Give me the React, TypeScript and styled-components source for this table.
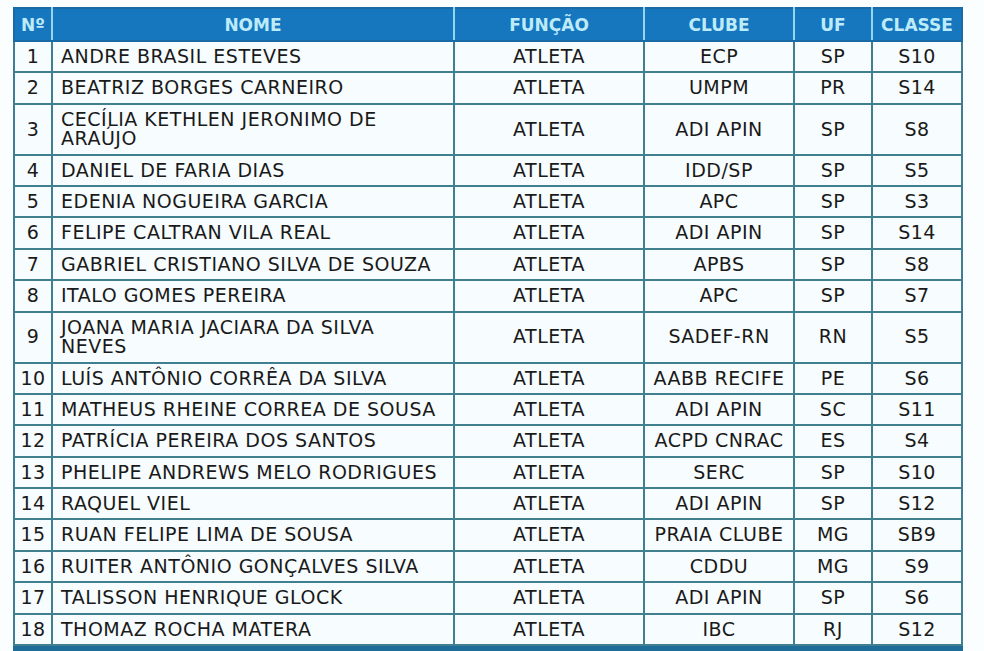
import styled, { createGlobalStyle } from 'styled-components'

const GlobalStyle = createGlobalStyle`
  html, body {
    margin: 0;
    padding: 0;
    background: #fbfeff;
  }
`

const Page = styled.div`
  padding: 7px 0 0 13px;
  font-family: "DejaVu Sans", Verdana, sans-serif;
`

const Table = styled.table`
  width: 948px;
  table-layout: fixed;
  border-collapse: collapse;
  background: #f7fcfe;
`

const HeadRow = styled.tr`
  height: 33px;
  background: #1677bf;
`

const HeadCell = styled.th`
  padding: 0;
  border: 2px solid #1a6aa6;
  border-left-color: #93d6ee;
  border-right-color: #93d6ee;
  color: #bdebfa;
  font-size: 17px;
  font-weight: bold;
  text-align: center;
  &:first-child { border-left-color: #1a6aa6; }
  &:last-child { border-right-color: #1a6aa6; }
`

const Row = styled.tr``

const Cell = styled.td<{ $left?: boolean }>`
  padding: 5px ${p => (p.$left ? '8px' : '0')} 4.9px;
  border: 2px solid #3f7f8f;
  color: #1a1a1a;
  font-size: 19px;
  letter-spacing: 0.5px;
  line-height: 19.5px;
  text-align: ${p => (p.$left ? 'left' : 'center')};
  vertical-align: middle;
`

const FootRow = styled.tr`
  height: 12px;
  background: #1e6d98;
`

const FootCell = styled.td`
  padding: 0;
  border: 2px solid #1e6d98;
`

type Athlete = {
  nome: string
  clube: string
  uf: string
  classe: string
}

const athletes: Athlete[] = [
  { nome: 'ANDRE BRASIL ESTEVES', clube: 'ECP', uf: 'SP', classe: 'S10' },
  { nome: 'BEATRIZ BORGES CARNEIRO', clube: 'UMPM', uf: 'PR', classe: 'S14' },
  { nome: 'CECÍLIA KETHLEN JERONIMO DE ARAÚJO', clube: 'ADI APIN', uf: 'SP', classe: 'S8' },
  { nome: 'DANIEL DE FARIA DIAS', clube: 'IDD/SP', uf: 'SP', classe: 'S5' },
  { nome: 'EDENIA NOGUEIRA GARCIA', clube: 'APC', uf: 'SP', classe: 'S3' },
  { nome: 'FELIPE CALTRAN VILA REAL', clube: 'ADI APIN', uf: 'SP', classe: 'S14' },
  { nome: 'GABRIEL CRISTIANO SILVA DE SOUZA', clube: 'APBS', uf: 'SP', classe: 'S8' },
  { nome: 'ITALO GOMES PEREIRA', clube: 'APC', uf: 'SP', classe: 'S7' },
  { nome: 'JOANA MARIA JACIARA DA SILVA NEVES', clube: 'SADEF-RN', uf: 'RN', classe: 'S5' },
  { nome: 'LUÍS ANTÔNIO CORRÊA DA SILVA', clube: 'AABB RECIFE', uf: 'PE', classe: 'S6' },
  { nome: 'MATHEUS RHEINE CORREA DE SOUSA', clube: 'ADI APIN', uf: 'SC', classe: 'S11' },
  { nome: 'PATRÍCIA PEREIRA DOS SANTOS', clube: 'ACPD CNRAC', uf: 'ES', classe: 'S4' },
  { nome: 'PHELIPE ANDREWS MELO RODRIGUES', clube: 'SERC', uf: 'SP', classe: 'S10' },
  { nome: 'RAQUEL VIEL', clube: 'ADI APIN', uf: 'SP', classe: 'S12' },
  { nome: 'RUAN FELIPE LIMA DE SOUSA', clube: 'PRAIA CLUBE', uf: 'MG', classe: 'SB9' },
  { nome: 'RUITER ANTÔNIO GONÇALVES SILVA', clube: 'CDDU', uf: 'MG', classe: 'S9' },
  { nome: 'TALISSON HENRIQUE GLOCK', clube: 'ADI APIN', uf: 'SP', classe: 'S6' },
  { nome: 'THOMAZ ROCHA MATERA', clube: 'IBC', uf: 'RJ', classe: 'S12' },
]

const App = () => {
  return (
    <Page>
      <GlobalStyle />
      <Table>
        <colgroup>
          <col style={{ width: 38 }} />
          <col style={{ width: 402 }} />
          <col style={{ width: 190 }} />
          <col style={{ width: 150 }} />
          <col style={{ width: 78 }} />
          <col style={{ width: 90 }} />
        </colgroup>
        <thead>
          <HeadRow>
            <HeadCell>Nº</HeadCell>
            <HeadCell>NOME</HeadCell>
            <HeadCell>FUNÇÃO</HeadCell>
            <HeadCell>CLUBE</HeadCell>
            <HeadCell>UF</HeadCell>
            <HeadCell>CLASSE</HeadCell>
          </HeadRow>
        </thead>
        <tbody>
          {athletes.map((a, i) => (
            <Row key={a.nome}>
              <Cell>{i + 1}</Cell>
              <Cell $left>{a.nome}</Cell>
              <Cell>ATLETA</Cell>
              <Cell>{a.clube}</Cell>
              <Cell>{a.uf}</Cell>
              <Cell>{a.classe}</Cell>
            </Row>
          ))}
        </tbody>
        <tfoot>
          <FootRow>
            <FootCell colSpan={6} />
          </FootRow>
        </tfoot>
      </Table>
    </Page>
  )
}

export default App
